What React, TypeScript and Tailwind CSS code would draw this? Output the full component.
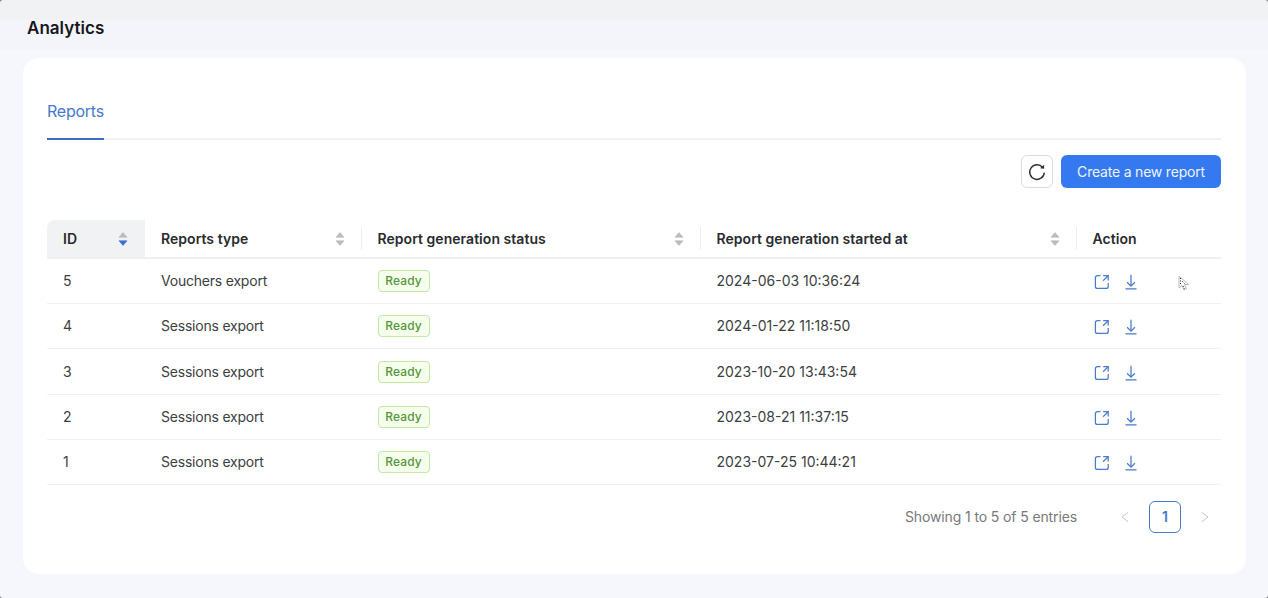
const rows = [
  { id: 5, type: "Vouchers export", at: "2024-06-03 10:36:24", h: "h-[45px]" },
  { id: 4, type: "Sessions export", at: "2024-01-22 11:18:50", h: "h-[45px]" },
  { id: 3, type: "Sessions export", at: "2023-10-20 13:43:54", h: "h-[46px]" },
  { id: 2, type: "Sessions export", at: "2023-08-21 11:37:15", h: "h-[45px]" },
  { id: 1, type: "Sessions export", at: "2023-07-25 10:44:21", h: "h-[45px]" },
];

const grid = "grid grid-cols-[98px_216.500px_339px_376px_144.500px]";

function Sorter({ active = false }: { active?: boolean }) {
  return (
    <svg width="10" height="14" viewBox="0 0 10 14" className="shrink-0">
      <path d="M5 .6 9 5.2H1z" fill="#b9bbbd" stroke="#b9bbbd" strokeWidth=".6" strokeLinejoin="round" />
      <path
        d="M5 13.4 9 8.8H1z"
        fill={active ? "#3b6fd0" : "#b9bbbd"}
        stroke={active ? "#3b6fd0" : "#b9bbbd"}
        strokeWidth=".6"
        strokeLinejoin="round"
      />
    </svg>
  );
}

function HeaderCell({ label, active, divider = true }: { label: string; active?: boolean; divider?: boolean }) {
  return (
    <div className={active ? "flex items-center rounded-tl-lg bg-[#f0f2f4] pl-4" : "flex items-center pl-4"}>
      <span className="grow">{label}</span>
      <Sorter active={active} />
      <div className={divider ? "ml-4 h-[23px] w-px bg-[#eeeeef]" : "ml-[17px]"} />
    </div>
  );
}

function ReloadIcon() {
  return (
    <svg width="18" height="18" viewBox="0 0 18 18" fill="none" stroke="#2f3032" strokeWidth="1.400">
      <path d="M16.300 9.600A7.300 7.300 0 1 1 14.700 4.500" />
      <path d="M16.100 1.700v4.100l-4.100-.6z" fill="#2f3032" stroke="none" />
    </svg>
  );
}

function OpenIcon() {
  return (
    <svg width="16" height="16" viewBox="0 0 16 16" fill="none" stroke="#4a7acb" strokeWidth="1.25">
      <path d="M6.500 1.600H3.400A2 2 0 0 0 1.400 3.600v8.800A2 2 0 0 0 3.400 14.400h8.800a2 2 0 0 0 2-2V9" />
      <path d="M9.200 1.600h5v5M14.200 1.600 9.100 6.700" />
    </svg>
  );
}

function DownloadIcon() {
  return (
    <svg width="14" height="16" viewBox="0 0 14 16" fill="none" stroke="#4a7acb" strokeWidth="1.25">
      <path d="M7 .8v11M3.100 8.200 7 12.100l3.900-3.900M1.500 14.900h11" />
    </svg>
  );
}

function Chevron({ flip = false }: { flip?: boolean }) {
  return (
    <svg width="8" height="12" viewBox="0 0 8 12" fill="none" stroke="#c3c5c8" className={flip ? "rotate-180" : ""}>
      <path d="M7.200 1.200 1 6l6.200 4.800" />
    </svg>
  );
}

export default function App() {
  return (
    <div className="h-[598px] w-[1268px] bg-[#777a7c]">
      <div className="relative flex h-full flex-col overflow-hidden rounded-[3px] bg-[linear-gradient(#f1f2f4_0px,#f1f2f4_19px,#f4f5fa_20px,#f4f5fa_49px,#f6f7fc_50px)] font-['Inter',sans-serif] text-sm text-[#3c3e42]">
        <h1 className="flex h-[58px] items-center pb-px pl-[27px] text-[17px] font-semibold tracking-[0.02px] text-[#17181a]">Analytics</h1>
        <main className="ml-[23px] flex h-[516px] w-[1223px] flex-col rounded-[16px] bg-white pl-6 pr-[25px]">
          <nav className="mt-[29px] flex h-[53px] border-b-2 border-[#f0f1f2] text-base">
            <a className="-mb-[2px] flex h-[53px] items-start border-b-2 border-[#3f6cbd] pt-3 leading-6 tracking-[-0.250px] text-[#4778cf]">Reports</a>
          </nav>
          <div className="mt-[15px] flex justify-end gap-2">
            <button className="flex h-[33px] w-8 items-center justify-center rounded-md border border-[#dcdcde]">
              <ReloadIcon />
            </button>
            <button className="flex h-[33px] w-40 items-center justify-center rounded-md bg-[#3579f0] tracking-[-0.200px] text-[#edf5ff]">
              Create a new report
            </button>
          </div>
          <section className="mt-8">
            <div className={`${grid} h-[39px] border-b-2 border-[#f0f0f1] font-semibold tracking-[0.040px] text-[#292b2f]`}>
              <HeaderCell label="ID" active divider={false} />
              <HeaderCell label="Reports type" />
              <HeaderCell label="Report generation status" />
              <HeaderCell label="Report generation started at" />
              <div className="flex items-center pl-4">Action</div>
            </div>
            {rows.map((r) => (
              <div key={r.id} className={`${grid} ${r.h} items-center border-b border-[#f0f0f1]`}>
                <div className="pl-4">{r.id}</div>
                <div className="pl-4 tracking-[-0.210px]">{r.type}</div>
                <div className="pl-4">
                  <span className="flex h-[22px] w-[52px] items-center justify-center rounded-[4px] border border-[#c3e8a8] bg-[#f5ffeb] text-xs font-medium tracking-[0.100px] text-[#55963c]">
                    Ready
                  </span>
                </div>
                <div className="pl-4">{r.at}</div>
                <div className="flex gap-[14px] pl-[17px] pt-[2px]">
                  <OpenIcon />
                  <DownloadIcon />
                </div>
              </div>
            ))}
          </section>
          <footer className="mt-4 flex items-center justify-end text-[#77797c]">
            <span className="mr-8 tracking-[-0.120px]">Showing 1 to 5 of 5 entries</span>
            <span className="flex w-8 justify-center"><Chevron /></span>
            <span className="mx-2 flex h-8 w-8 items-center justify-center rounded-md border border-[#4c78c8] font-semibold text-[#4778cf]">1</span>
            <span className="flex w-8 justify-center"><Chevron flip /></span>
          </footer>
        </main>
        <svg className="absolute left-[1178px] top-[275px]" width="12" height="17" viewBox="0 0 12 17">
          <path d="M1 1v12l3-2.500 2 4.500 2.500-1-2-4.500h4z" fill="#fff" stroke="#bcbcbc" />
          <path d="M2.500 3v6M4 6l3 3M5 11l1.500 3" stroke="#222" strokeDasharray="1 1.500" />
        </svg>
      </div>
    </div>
  );
}
